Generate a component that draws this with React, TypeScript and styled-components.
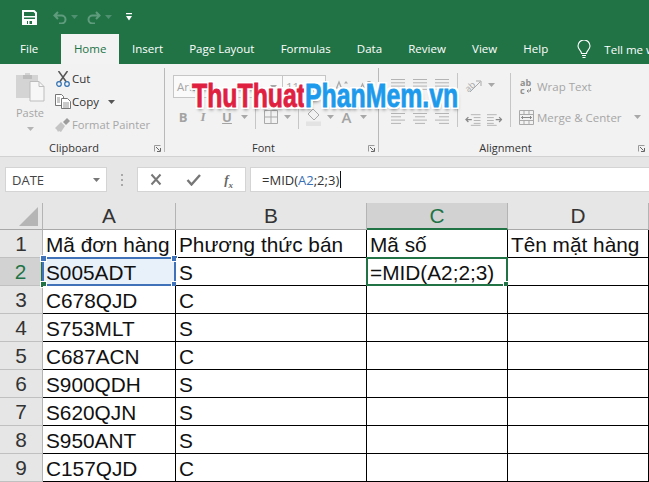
import React from 'react'
import styled, { createGlobalStyle } from 'styled-components'

const GREEN = '#217346'
const UI_FONT = `'Open Sans', 'Noto Sans', sans-serif`
const SHEET_FONT = `'Liberation Sans', Arial, sans-serif`

const GlobalStyle = createGlobalStyle`
  html, body {
    margin: 0;
    padding: 0;
    background: #fff;
  }
`

const TABS = ['Insert', 'Page Layout', 'Formulas', 'Data', 'Review', 'View', 'Help']

const ROWS = [
  { n: 1, a: 'Mã đơn hàng', b: 'Phương thức bán', c: 'Mã số', d: 'Tên mặt hàng' },
  { n: 2, a: 'S005ADT', b: 'S', c: '=MID(A2;2;3)', d: '' },
  { n: 3, a: 'C678QJD', b: 'C', c: '', d: '' },
  { n: 4, a: 'S753MLT', b: 'S', c: '', d: '' },
  { n: 5, a: 'C687ACN', b: 'C', c: '', d: '' },
  { n: 6, a: 'S900QDH', b: 'S', c: '', d: '' },
  { n: 7, a: 'S620QJN', b: 'S', c: '', d: '' },
  { n: 8, a: 'S950ANT', b: 'S', c: '', d: '' },
  { n: 9, a: 'C157QJD', b: 'C', c: '', d: '' },
]

const Caret = ({ color = '#a8a8a8' }: { color?: string }) => (
  <svg width="7" height="4" viewBox="0 0 7 4">
    <path d="M0 0h7L3.5 4z" fill={color} />
  </svg>
)

const SaveIcon = () => (
  <svg width="15" height="15" viewBox="0 0 15 15">
    <path d="M1 1h11l2 2v11H1z" fill="none" stroke="#fff" strokeWidth="2" />
    <path d="M1 6h13v1.500H1z" fill="#fff" />
    <path d="M2 9h11v5H2z" fill="#fff" />
    <path d="M5 11h5v3H5z" fill={GREEN} />
    <path d="M6 11h1.500v3H6z" fill="#fff" />
  </svg>
)

const UndoIcon = ({ flip }: { flip?: boolean }) => (
  <svg width="14" height="13" viewBox="0 0 14 13" style={flip ? { transform: 'scaleX(-1)' } : undefined}>
    <path d="M5 1 1.500 4.500 5 8M2 4.500h6.500a4 4 0 0 1 0 8H6" fill="none" stroke="#5f9c7d" strokeWidth="2" />
  </svg>
)

const CustomizeIcon = () => (
  <svg width="6" height="8" viewBox="0 0 6 8">
    <path d="M0 0h6v1.200H0zM0 3h6L3 7.500z" fill="#fff" />
  </svg>
)

const BulbIcon = () => (
  <svg width="14" height="19" viewBox="0 0 14 19" fill="none" stroke="#fff" strokeWidth="1.100">
    <path d="M4.500 13.500C4.500 10.500 1 9.500 1 6a6 6 0 0 1 12 0c0 3.500-3.500 4.500-3.500 7.500z" />
    <path d="M5 15.500h4M5.500 17.500h3" />
  </svg>
)

const PasteIcon = () => (
  <svg width="30" height="30" viewBox="0 0 30 30">
    <path d="M1 3h9V1h5v2h8v23H1z" fill="#d4d4d4" />
    <path d="M8 3h9v4H8z" fill="#bdbdbd" />
    <path d="M15 9.500h9l5 5V29H15z" fill="#f7f7f7" stroke="#bdbdbd" />
    <path d="M24 9.500v5h5" fill="none" stroke="#bdbdbd" />
  </svg>
)

const CutIcon = () => (
  <svg width="14" height="16" viewBox="0 0 14 16" fill="none">
    <path d="M2.500 0 10 10.500M11.500 0 4 10.500" stroke="#555" strokeWidth="1.500" />
    <circle cx="3" cy="13" r="2.300" stroke="#2f6fb3" strokeWidth="1.200" />
    <circle cx="11" cy="13" r="2.300" stroke="#2f6fb3" strokeWidth="1.200" />
  </svg>
)

const CopyIcon = () => (
  <svg width="16" height="15" viewBox="0 0 16 15" fill="#fff" stroke="#666" strokeWidth=".9">
    <path d="M.5.500h6l2 2v9h-8z" />
    <path d="M6.500 4.500h6l3 3v7h-9z" />
    <path d="M2 4h3M2 6h3M2 8h3M8 9h6M8 11h6M8 13h6" strokeWidth=".7" />
  </svg>
)

const PainterIcon = () => (
  <svg width="17" height="16" viewBox="0 0 17 16">
    <path d="M1 11 7 5l4 4-4 6-2-1-1 1-1-2z" fill="#c4c4c4" />
    <path d="m9 5 4-4 3 3-4 4z" fill="#9c9c9c" />
  </svg>
)

const BordersIcon = () => (
  <svg width="14" height="14" viewBox="0 0 14 14" fill="none" stroke="#a9a9a9">
    <path d="M.5.500h13v13H.5zM7 .5v13M.5 7h13" />
  </svg>
)

const FillIcon = () => (
  <svg width="15" height="18" viewBox="0 0 15 18">
    <path d="m7 1 6 6-5 5-6-6z" fill="none" stroke="#a9a9a9" />
    <path d="M0 13.500h15V18H0z" fill="#e3e3e3" />
  </svg>
)

const FontGrowIcon = ({ small }: { small?: boolean }) => (
  <svg width="13" height="13" viewBox="0 0 13 13" fill="none" stroke="#a9a9a9">
    <path d={small ? 'M1 12 4.500 4 8 12M2 9.500h5' : 'M0 12 4 2l4 10M1.500 8.500h5'} strokeWidth="1.300" />
    <path d={small ? 'M9 1h4l-2 2.500z' : 'M9 3.500h4L11 1z'} fill="#a9a9a9" stroke="none" />
  </svg>
)

const LinesIcon = ({ align }: { align: 'left' | 'center' | 'right' | 'full' }) => {
  const widths = align === 'full' ? [14, 14, 14, 14] : [14, 10, 14, 10]
  const x = (w: number) => (align === 'right' ? 14 - w : align === 'left' || align === 'full' ? 0 : (14 - w) / 2)
  return (
    <svg width="14" height="13" viewBox="0 0 14 13" stroke="#b4b4b4">
      {widths.map((w, i) => (
        <path key={i} d={`M${x(w)} ${1.5 + i * 3.3}h${w}`} />
      ))}
    </svg>
  )
}

const OrientIcon = () => (
  <svg width="17" height="15" viewBox="0 0 17 15">
    <text x="0" y="12" fontFamily="Open Sans" fontSize="9" fill="#a9a9a9" transform="rotate(-42 5 9)">ab</text>
    <path d="M5 14 15 4M11 3h5v5" fill="none" stroke="#a9a9a9" />
  </svg>
)

const IndentIcon = ({ flip }: { flip?: boolean }) => (
  <svg width="16" height="12" viewBox="0 0 16 12" stroke="#b4b4b4" style={flip ? { transform: 'scaleX(-1)' } : undefined}>
    <path d="M6 .5h10M9 3.500h7M9 6.500h7M9 9.500h7M6 11.500h10" />
    <path d="M1 5.500h6M3.500 3 1 5.500 3.500 8" fill="none" stroke="#8a8a8a" strokeWidth="1.300" />
  </svg>
)

const WrapIcon = () => (
  <svg width="12" height="16" viewBox="0 0 12 16" fill="#8f8f8f">
    <text x="0" y="7.500" fontFamily="Open Sans" fontSize="9" fontWeight="700">ab</text>
    <text x="0" y="15.500" fontFamily="Open Sans" fontSize="9" fontWeight="700">c</text>
    <path d="M10.500 10v3H7M8.500 11.500 7 13l1.500 1.500" fill="none" stroke="#8f8f8f" />
  </svg>
)

const MergeIcon = () => (
  <svg width="15" height="15" viewBox="0 0 15 15" fill="none" stroke="#a9a9a9">
    <path d="M.5.500h14v14H.5zM.5 4.500h14M.5 10.500h14M5 .5v4M10 .5v4M5 10.500v4M10 10.500v4" />
    <path d="M2.500 7.500h10M4 6 2.500 7.500 4 9M11 6l1.500 1.500L11 9" stroke="#8a8a8a" />
  </svg>
)

const Launcher = () => (
  <LauncherBox viewBox="0 0 7 7" fill="none" stroke="#9a9a9a">
    <path d="M.5 6.500v-6h6" />
    <path d="M2 2l3.500 3.500M6.500 3v3.500H3" stroke="#666" />
  </LauncherBox>
)

const App: React.FC = () => {
  return (
    <Screen>
      <GlobalStyle />

      <QuickBar>
        <SaveIcon />
        <QuickGroup $left={16}>
          <UndoIcon />
          <Caret color="#4f9070" />
        </QuickGroup>
        <QuickGroup $left={9}>
          <UndoIcon flip />
          <Caret color="#4f9070" />
        </QuickGroup>
        <QuickGroup $left={14}>
          <CustomizeIcon />
        </QuickGroup>
      </QuickBar>

      <TabBar>
        <Tab>File</Tab>
        <ActiveTab>Home</ActiveTab>
        {TABS.map((tab) => (
          <Tab key={tab}>{tab}</Tab>
        ))}
        <TellMe>
          <BulbIcon />
          <span>Tell me what you want to do</span>
        </TellMe>
      </TabBar>

      <Ribbon>
        <Group $width={165}>
          <GroupBody>
            <PasteColumn>
              <PasteIcon />
              <PasteLabel>Paste</PasteLabel>
              <Caret color="#b5b5b5" />
            </PasteColumn>
            <ClipboardList>
              <ClipboardRow>
                <IconSlot>
                  <CutIcon />
                </IconSlot>
                Cut
              </ClipboardRow>
              <ClipboardRow>
                <IconSlot>
                  <CopyIcon />
                </IconSlot>
                Copy
                <CaretGap>
                  <Caret color="#555" />
                </CaretGap>
              </ClipboardRow>
              <ClipboardRow $disabled>
                <IconSlot>
                  <PainterIcon />
                </IconSlot>
                Format Painter
              </ClipboardRow>
            </ClipboardList>
          </GroupBody>
          <GroupLabel>Clipboard</GroupLabel>
          <Launcher />
        </Group>

        <Group $width={214}>
          <FontBody>
            <ComboRow>
              <Combo $width={110}>
                Arial
                <Caret />
              </Combo>
              <Combo $width={44}>
                11
                <Caret />
              </Combo>
              <FontSizeIcons>
                <FontGrowIcon />
                <FontGrowIcon small />
              </FontSizeIcons>
            </ComboRow>
            <FontTools>
              <StyleLetter>B</StyleLetter>
              <StyleLetter $italic>I</StyleLetter>
              <StyleLetter $underline>U</StyleLetter>
              <Caret />
              <ToolDivider />
              <BordersIcon />
              <Caret />
              <ToolDivider />
              <FillIcon />
              <Caret />
              <BigA>A</BigA>
              <Caret />
            </FontTools>
          </FontBody>
          <GroupLabel>Font</GroupLabel>
          <Launcher />
        </Group>

        <Group $width={270} $last>
          <GroupBody>
            <AlignGrid>
              <LinesIcon align="full" />
              <LinesIcon align="full" />
              <LinesIcon align="full" />
              <LinesIcon align="left" />
              <LinesIcon align="center" />
              <LinesIcon align="right" />
            </AlignGrid>
            <AlignDivider />
            <OrientColumn>
              <OrientRow>
                <OrientIcon />
                <Caret />
              </OrientRow>
              <OrientRow>
                <IndentIcon />
                <IndentIcon flip />
              </OrientRow>
            </OrientColumn>
            <AlignDivider />
            <WrapColumn>
              <WrapRow>
                <IconSlot $width={16}>
                  <WrapIcon />
                </IconSlot>
                Wrap Text
              </WrapRow>
              <WrapRow>
                <IconSlot $width={16}>
                  <MergeIcon />
                </IconSlot>
                Merge &amp; Center
                <CaretGap>
                  <Caret />
                </CaretGap>
              </WrapRow>
            </WrapColumn>
          </GroupBody>
          <GroupLabel>Alignment</GroupLabel>
          <Launcher />
        </Group>

        <Watermark>
          <WatermarkRed>ThuThuat</WatermarkRed>
          <WatermarkBlue>PhanMem.vn</WatermarkBlue>
        </Watermark>
      </Ribbon>

      <FormulaBar>
        <NameBox>
          DATE
          <Caret color="#777" />
        </NameBox>
        <Grip />
        <FormulaButtons>
          <svg width="14" height="13" viewBox="0 0 14 13" stroke="#777" strokeWidth="2">
            <path d="m2.500 1.500 9 10M11.500 1.500l-9 10" />
          </svg>
          <svg width="15" height="12" viewBox="0 0 15 12" fill="none" stroke="#777" strokeWidth="2.400">
            <path d="m1.500 6 4 4.500L14 1" />
          </svg>
          <FxLabel>
            f<sub>x</sub>
          </FxLabel>
        </FormulaButtons>
        <FormulaInput>
          =MID(<CellRef>A2</CellRef>;2;3)
          <TextCursor />
        </FormulaInput>
      </FormulaBar>

      <Sheet>
        <CornerCell>
          <svg width="19" height="19" viewBox="0 0 19 19">
            <path d="M19 0v19H0z" fill="#b5b5b5" />
          </svg>
        </CornerCell>
        <ColumnHeader>A</ColumnHeader>
        <ColumnHeader>B</ColumnHeader>
        <ColumnHeader $active>C</ColumnHeader>
        <ColumnHeader>D</ColumnHeader>

        {ROWS.map((row) => {
          const isCurrent = row.n === 2
          return (
            <React.Fragment key={row.n}>
              <RowHeader $active={isCurrent}>{row.n}</RowHeader>
              <Cell $tinted={isCurrent}>
                {row.a}
                {isCurrent && (
                  <RangeBox $color="#3f72b8">
                    <Handle $color="#3f72b8" $x="left" $y="top" />
                    <Handle $color="#3f72b8" $x="right" $y="top" />
                    <Handle $color={GREEN} $x="left" $y="bottom" />
                    <Handle $color="#3f72b8" $x="right" $y="bottom" />
                  </RangeBox>
                )}
              </Cell>
              <Cell>{row.b}</Cell>
              <Cell>
                {row.c}
                {isCurrent && (
                  <RangeBox $color={GREEN}>
                    <Handle $color={GREEN} $x="right" $y="bottom" />
                  </RangeBox>
                )}
              </Cell>
              <Cell>{row.d}</Cell>
            </React.Fragment>
          )
        })}
      </Sheet>
    </Screen>
  )
}

export default App

const Screen = styled.div`
  width: 649px;
  height: 482px;
  overflow: hidden;
  background: #e6e6e6;
  font-family: ${UI_FONT};
`

const QuickBar = styled.div`
  display: flex;
  align-items: center;
  height: 34px;
  padding: 0 0 0 22px;
  box-sizing: border-box;
  background: ${GREEN};
`

const QuickGroup = styled.div<{ $left: number }>`
  display: flex;
  align-items: center;
  gap: 4px;
  margin-left: ${(p) => p.$left}px;
`

const TabBar = styled.div`
  display: flex;
  height: 30px;
  padding-left: 7px;
  background: ${GREEN};
  color: #fff;
  font-size: 11.5px;
  white-space: nowrap;
`

const Tab = styled.div`
  display: flex;
  align-items: center;
  padding: 0 13.1px 1px;
`

const ActiveTab = styled(Tab)`
  margin-left: 10px;
  padding: 0 12.5px 1px;
  background: #f3f3f3;
  color: ${GREEN};
`

const TellMe = styled.div`
  display: flex;
  align-items: center;
  gap: 13px;
  margin-left: 16px;
`

const Ribbon = styled.div`
  position: relative;
  display: flex;
  height: 93px;
  box-sizing: border-box;
  padding-top: 3px;
  background: #f2f2f2;
  border-bottom: 1px solid #d2d2d2;
`

const Group = styled.div<{ $width: number; $last?: boolean }>`
  position: relative;
  display: flex;
  flex-direction: column;
  flex: none;
  box-sizing: border-box;
  width: ${(p) => p.$width}px;

  &::after {
    content: '';
    display: ${(p) => (p.$last ? 'none' : 'block')};
    position: absolute;
    top: 1px;
    right: 0;
    bottom: 4px;
    width: 1px;
    background: #b9b9b9;
  }
`

const GroupBody = styled.div`
  display: flex;
  flex: 1;
  min-height: 0;
`

const GroupLabel = styled.div`
  height: 18px;
  padding-right: 17px;
  color: #333;
  font-size: 11px;
  line-height: 20px;
  text-align: center;
`

const LauncherBox = styled.svg`
  position: absolute;
  right: 4px;
  bottom: 4px;
  width: 7px;
  height: 7px;
`

const PasteColumn = styled.div`
  display: flex;
  flex-direction: column;
  align-items: center;
  width: 30px;
  margin-left: 15px;
  padding-top: 5px;
  color: #a6a6a6;
  font-size: 11px;
`

const PasteLabel = styled.div`
  margin: 3px 0 7px;
  line-height: 15px;
`

const ClipboardList = styled.div`
  display: flex;
  flex-direction: column;
  margin-left: 8px;
`

const ClipboardRow = styled.div<{ $disabled?: boolean }>`
  display: flex;
  align-items: center;
  height: 23.2px;
  color: ${(p) => (p.$disabled ? '#a6a6a6' : '#333')};
  font-size: ${(p) => (p.$disabled ? '11.2px' : '11.5px')};
  white-space: nowrap;
`

const IconSlot = styled.span<{ $width?: number }>`
  display: flex;
  justify-content: center;
  width: ${(p) => p.$width ?? 19}px;
`

const CaretGap = styled.span`
  display: flex;
  margin-left: 9px;
`

const FontBody = styled.div`
  display: flex;
  flex-direction: column;
  flex: 1;
  min-height: 0;
  padding: 8px 0 0 8px;
`

const ComboRow = styled.div`
  display: flex;
  align-items: center;
`

const Combo = styled.div<{ $width: number }>`
  display: flex;
  align-items: center;
  justify-content: space-between;
  box-sizing: border-box;
  width: ${(p) => p.$width}px;
  height: 23px;
  margin-right: -1px;
  padding: 0 5px 0 3px;
  border: 1px solid #c6c6c6;
  background: #fafafa;
  color: #a6a6a6;
  font-size: 11.5px;
`

const FontSizeIcons = styled.div`
  display: flex;
  gap: 10px;
  margin-left: 10px;
`

const FontTools = styled.div`
  display: grid;
  grid-template-columns: 20px 20px 28px 6px 16px 15px 18px 4px 27px 6px 27px 6px;
  align-items: center;
  justify-items: center;
  height: 24px;
  margin-top: 7px;
`

const StyleLetter = styled.span<{ $italic?: boolean; $underline?: boolean }>`
  color: #a3a3a3;
  font-family: ${(p) => (p.$italic ? `'Liberation Serif', serif` : UI_FONT)};
  font-size: 13px;
  font-style: ${(p) => (p.$italic ? 'italic' : 'normal')};
  font-weight: 700;
  text-decoration: ${(p) => (p.$underline ? 'underline' : 'none')};
`

const ToolDivider = styled.span`
  width: 1px;
  height: 24px;
  background: #c6c6c6;
`

const BigA = styled.span`
  color: #a3a3a3;
  font-size: 15px;
  font-weight: 600;
`

const AlignGrid = styled.div`
  display: grid;
  grid-template-columns: repeat(3, 14px);
  grid-template-rows: 13px 13px;
  gap: 21px 8px;
  align-content: start;
  margin: 11px 0 0 12px;
`

const AlignDivider = styled.span`
  flex: none;
  width: 1px;
  height: 54px;
  margin: 6px 0 0 8px;
  background: #c6c6c6;
`

const OrientColumn = styled.div`
  display: flex;
  flex-direction: column;
  gap: 19px;
  width: 37px;
  margin: 10px 0 0 7px;
`

const OrientRow = styled.div`
  display: flex;
  align-items: center;
  gap: 6px;
  height: 16px;
`

const WrapColumn = styled.div`
  display: flex;
  flex-direction: column;
  gap: 7px;
  margin: 7px 0 0 7px;
`

const WrapRow = styled.div`
  display: flex;
  align-items: center;
  gap: 3px;
  height: 24px;
  color: #a6a6a6;
  font-size: 11.5px;
  white-space: nowrap;
`

const Watermark = styled.div`
  position: absolute;
  left: 192px;
  top: 13px;
  height: 36px;
  transform: scaleX(0.73);
  transform-origin: left center;
  font-family: ${SHEET_FONT};
  font-size: 34px;
  font-weight: 700;
  line-height: 36px;
  white-space: nowrap;
  text-shadow:
    3px 0 0 #fff, -3px 0 0 #fff, 0 2px 0 #fff, 0 -2px 0 #fff,
    3px 2px 0 #fff, -3px 2px 0 #fff, 3px -2px 0 #fff, -3px -2px 0 #fff,
    1px 3px 4px rgba(0, 0, 0, 0.5);
`

const WatermarkRed = styled.span`
  color: #e0203f;
  -webkit-text-stroke: 0.8px #e0203f;
`

const WatermarkBlue = styled.span`
  color: #1e9aec;
  -webkit-text-stroke: 0.8px #1e9aec;
`

const FormulaBar = styled.div`
  display: flex;
  align-items: stretch;
  height: 25px;
  margin-top: 10px;
  padding-left: 5px;
`

const NameBox = styled.div`
  display: flex;
  align-items: center;
  justify-content: space-between;
  box-sizing: border-box;
  width: 102px;
  padding: 0 6px 0 6px;
  border: 1px solid #d4d4d4;
  background: #fff;
  color: #444;
  font-size: 13px;
`

const Grip = styled.div`
  width: 30px;
  background-image: repeating-linear-gradient(#a8a8a8 0 2px, transparent 2px 5px);
  background-size: 2px 12px;
  background-position: center;
  background-repeat: no-repeat;
`

const FormulaButtons = styled.div`
  display: flex;
  align-items: center;
  justify-content: space-between;
  box-sizing: border-box;
  width: 109px;
  padding: 0 12px 0 11px;
  border: 1px solid #d4d4d4;
  background: #fff;
`

const FxLabel = styled.span`
  color: #666;
  font-family: 'Liberation Serif', serif;
  font-size: 13px;
  font-style: italic;
  font-weight: 700;

  sub {
    font-size: 9px;
    line-height: 0;
  }
`

const FormulaInput = styled.div`
  display: flex;
  align-items: center;
  flex: 1;
  margin-left: 4px;
  padding-left: 11px;
  border: 1px solid #d4d4d4;
  border-right: none;
  background: #fff;
  color: #333;
  font-size: 13px;
  white-space: pre;
`

const CellRef = styled.span`
  color: #3a6fb5;
`

const TextCursor = styled.span`
  width: 1px;
  height: 17px;
  margin-left: 1px;
  background: #111;
`

const Sheet = styled.div`
  display: grid;
  grid-template-columns: 43px 133px 191px 141px 141px;
  grid-template-rows: 27px repeat(9, 28px);
  margin-top: 11px;
  background: #fff;
  font-family: ${SHEET_FONT};
  font-size: 20.8px;
  color: #111;
`

const CornerCell = styled.div`
  display: flex;
  align-items: flex-end;
  justify-content: flex-end;
  box-sizing: border-box;
  padding: 0 4px 3px 0;
  background: #e6e6e6;
  border-right: 1px solid #b4b4b4;
  border-bottom: 1px solid #a8a8a8;
`

const ColumnHeader = styled.div<{ $active?: boolean }>`
  display: flex;
  align-items: center;
  justify-content: center;
  box-sizing: border-box;
  background: ${(p) => (p.$active ? '#d2d2d2' : '#e6e6e6')};
  border-right: 1px solid #b4b4b4;
  border-bottom: ${(p) => (p.$active ? `2px solid ${GREEN}` : '1px solid #a8a8a8')};
  color: ${(p) => (p.$active ? GREEN : '#333')};
`

const RowHeader = styled.div<{ $active?: boolean }>`
  display: flex;
  align-items: center;
  justify-content: center;
  box-sizing: border-box;
  background: ${(p) => (p.$active ? '#d2d2d2' : '#e6e6e6')};
  border-right: ${(p) => (p.$active ? `2px solid ${GREEN}` : '1px solid #b4b4b4')};
  border-bottom: 1px solid #c0c0c0;
  color: ${(p) => (p.$active ? GREEN : '#333')};
`

const Cell = styled.div<{ $tinted?: boolean }>`
  position: relative;
  display: flex;
  align-items: flex-end;
  box-sizing: border-box;
  padding-left: 3px;
  background: ${(p) => (p.$tinted ? '#e8f0fa' : '#fff')};
  border-right: 1px solid #000;
  border-bottom: 1px solid #000;
  white-space: nowrap;
`

const RangeBox = styled.div<{ $color: string }>`
  position: absolute;
  inset: -1px;
  border: 2px solid ${(p) => p.$color};
  pointer-events: none;
`

const Handle = styled.span<{ $color: string; $x: 'left' | 'right'; $y: 'top' | 'bottom' }>`
  position: absolute;
  ${(p) => p.$x}: -4px;
  ${(p) => p.$y}: -4px;
  width: 5px;
  height: 5px;
  background: ${(p) => p.$color};
  border: 1px solid #fff;
`
